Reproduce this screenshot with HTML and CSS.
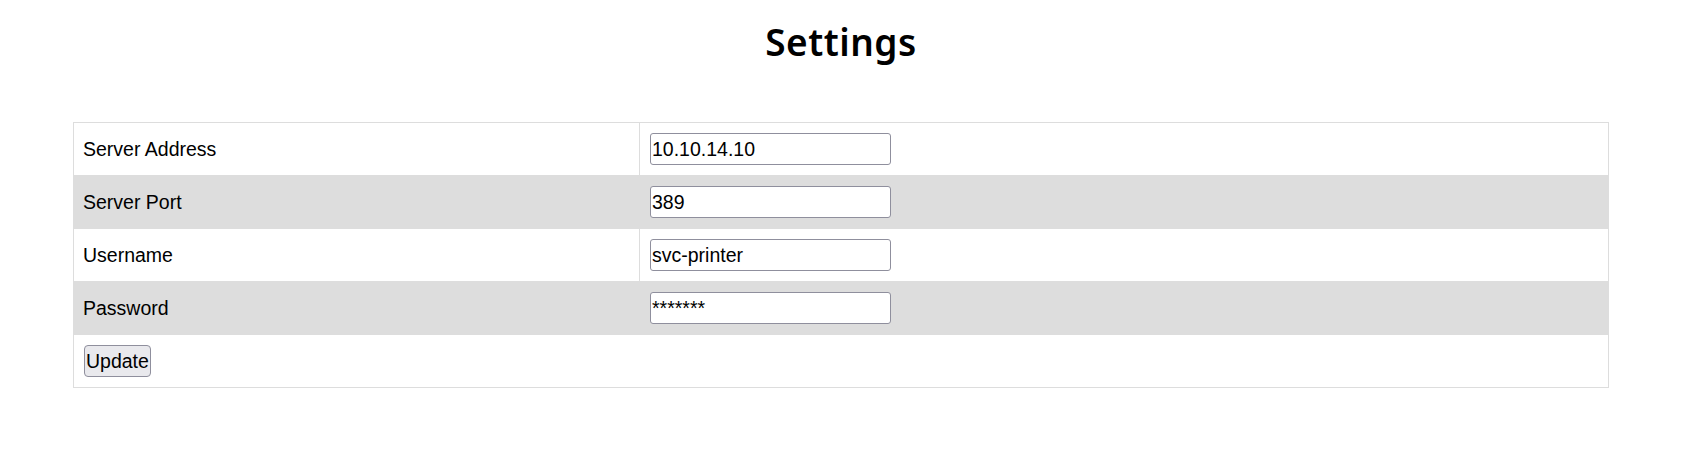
FILE: index.html
```html
<!DOCTYPE html>
<html>
<head>
<meta charset="utf-8">
<title>Settings</title>
<link rel="stylesheet" href="styles.css">
</head>
<body>
<h1 class="title">Settings</h1>
<form class="settings-form">
<table class="settings">
<tr class="row">
<td class="label">Server Address</td>
<td class="value"><input class="field" type="text" value="10.10.14.10"></td>
</tr>
<tr class="row alt">
<td class="label">Server Port</td>
<td class="value"><input class="field" type="text" value="389"></td>
</tr>
<tr class="row">
<td class="label">Username</td>
<td class="value"><input class="field" type="text" value="svc-printer"></td>
</tr>
<tr class="row alt">
<td class="label">Password</td>
<td class="value"><input class="field" type="text" value="*******"></td>
</tr>
<tr class="row">
<td class="action" colspan="2"><button class="btn" type="button">Update</button></td>
</tr>
</table>
</form>
</body>
</html>
```
FILE: styles.css
```css
html, body {
  background: #ffffff;
}
body {
  margin: 0 20px 0 0;
  padding: 8px;
  font-family: "Liberation Sans", Arial, sans-serif;
  color: #000;
}
.title {
  margin: 13px 0 0 0;
  text-align: center;
  font-family: "Noto Sans", sans-serif;
  font-weight: 600;
  font-size: 37px;
  line-height: 42px;
  letter-spacing: 0.5px;
  color: #000;
}
.settings-form {
  margin: 59px 0 0 0;
}
.settings {
  width: 1536px;
  margin: 0 auto;
  border-collapse: collapse;
  border: 1px solid #dddddd;
  font-size: 19.5px;
}
.settings td {
  border: 1px solid #dddddd;
  padding: 10px 9px;
  height: 32px;
  vertical-align: middle;
}
.settings td.value {
  padding-left: 10px;
}
.label {
  width: 547px;
}
.row.alt {
  background: #dddddd;
}
.field {
  box-sizing: border-box;
  display: block;
  width: 241px;
  height: 32px;
  margin: 0;
  padding: 0 1px;
  border: 1px solid #8f8f9d;
  border-radius: 3px;
  background: #ffffff;
  font-family: "Liberation Sans", Arial, sans-serif;
  font-size: 19.5px;
  color: #000;
}
.btn {
  box-sizing: border-box;
  display: block;
  height: 32px;
  margin: 0 0 0 1px;
  padding: 0 1px;
  border: 1px solid #8f8f9d;
  border-radius: 4px;
  background: #e9e9ed;
  font-family: "Liberation Sans", Arial, sans-serif;
  font-size: 19.5px;
  color: #000;
}
```
